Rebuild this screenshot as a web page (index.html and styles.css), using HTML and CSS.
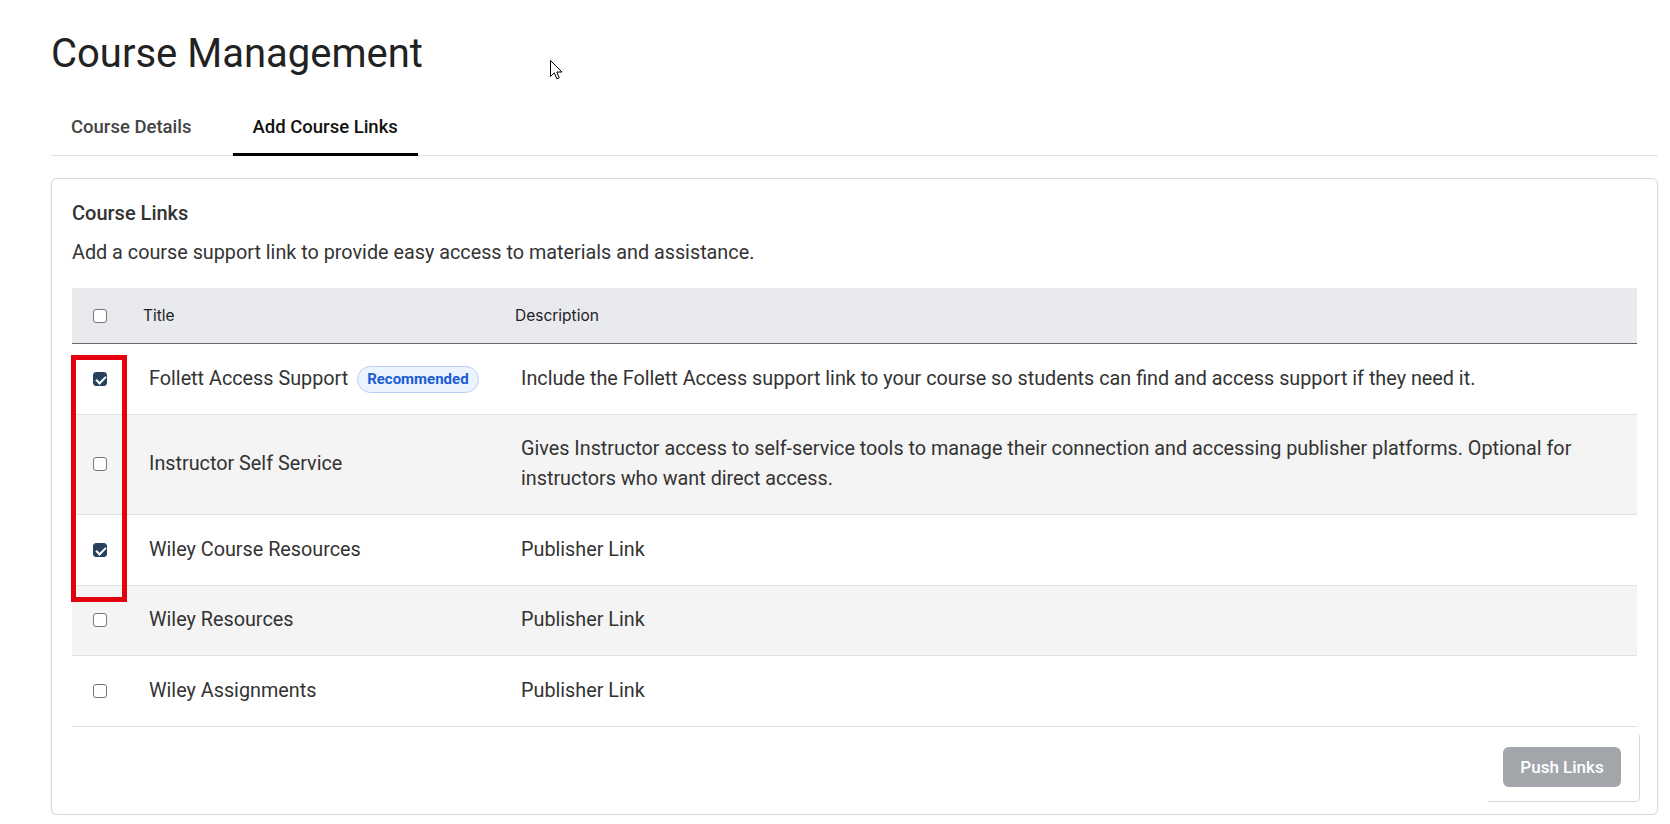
FILE: index.html
```html
<!DOCTYPE html>
<html lang="en">
<head>
    <meta charset="UTF-8">
    <title>Course Management</title>
    <link rel="stylesheet" href="styles.css">
</head>
<body>
    <div class="page">
        <h1 class="page-title">Course Management</h1>

        <div class="tabs">
            <div class="tab">Course Details</div>
            <div class="tab active">Add Course Links</div>
        </div>

        <div class="card">
            <h2 class="card-title">Course Links</h2>
            <p class="card-text">Add a course support link to provide easy access to materials and assistance.</p>

            <table class="links-table">
                <colgroup>
                    <col class="col-check">
                    <col class="col-title">
                    <col>
                </colgroup>
                <thead>
                    <tr>
                        <th><input type="checkbox" class="check"></th>
                        <th>Title</th>
                        <th>Description</th>
                    </tr>
                </thead>
                <tbody>
                    <tr>
                        <td><input type="checkbox" class="check" checked></td>
                        <td>Follett Access Support <span class="badge">Recommended</span></td>
                        <td>Include the Follett Access support link to your course so students can find and access support if they need it.</td>
                    </tr>
                    <tr>
                        <td><input type="checkbox" class="check"></td>
                        <td>Instructor Self Service</td>
                        <td>Gives Instructor access to self-service tools to manage their connection and accessing publisher platforms. Optional for instructors who want direct access.</td>
                    </tr>
                    <tr>
                        <td><input type="checkbox" class="check" checked></td>
                        <td>Wiley Course Resources</td>
                        <td>Publisher Link</td>
                    </tr>
                    <tr>
                        <td><input type="checkbox" class="check"></td>
                        <td>Wiley Resources</td>
                        <td>Publisher Link</td>
                    </tr>
                    <tr>
                        <td><input type="checkbox" class="check"></td>
                        <td>Wiley Assignments</td>
                        <td>Publisher Link</td>
                    </tr>
                </tbody>
            </table>

            <div class="card-footer">
                <button type="button" class="push-btn" disabled>Push Links</button>
            </div>
        </div>
    </div>

    <!-- annotation box drawn over the checkbox column -->
    <div class="highlight"></div>

    <svg class="cursor" width="13" height="21" viewBox="0 0 13 21">
        <path d="M0.5 0.5 L0.5 16.5 L4.3 12.8 L6.8 18.8 L9.2 17.8 L6.8 12 L12 12 Z" fill="#fff" stroke="#000" stroke-width="1" stroke-linejoin="round"/>
    </svg>
</body>
</html>
```

FILE: styles.css
```css
body {
    margin: 0;
    font-family: Roboto, "Liberation Sans", sans-serif;
    color: #333;
    background-color: #fff;
}
.page {
    padding: 0 12px 0 51px;
}
.page-title {
    font-size: 40px;
    font-weight: 400;
    line-height: 48px;
    color: #222;
    margin: 30px 0 22px;
}
.tabs {
    display: flex;
    gap: 21px;
    border-bottom: 1px solid #e2e2e2;
}
.tab {
    padding: 15px 20px 14px;
    font-size: 18.5px;
    font-weight: 500;
    line-height: 24px;
    color: #444;
    border-bottom: 3px solid transparent;
    margin-bottom: -1px;
}
.tab.active {
    color: #111;
    border-bottom-color: #000;
}
.card {
    margin-top: 22px;
    border: 1px solid #d8d8d8;
    border-radius: 6px;
    box-shadow: 0 1px 3px rgba(0, 0, 0, 0.08);
    padding: 20px 20px 12px;
}
.card-title {
    margin: 0;
    font-size: 20px;
    font-weight: 500;
    line-height: 28px;
    color: #333;
}
.card-text {
    margin: 12px 0 21px;
    font-size: 19.8px;
    line-height: 28px;
    color: #333;
}
.links-table {
    width: 100%;
    border-collapse: collapse;
    table-layout: fixed;
}
.col-check {
    width: 59px;
}
.col-title {
    width: 372px;
}
.links-table th {
    height: 55px;
    padding: 0 12px;
    text-align: left;
    font-family: Inter, "Liberation Sans", sans-serif;
    font-size: 15.5px;
    font-weight: 400;
    color: #222;
    background-color: #e9eaee;
    border-bottom: 1px solid #666;
}
.links-table td {
    padding: 19.5px 18px 20px;
    font-size: 19.8px;
    line-height: 30px;
    color: #333;
    vertical-align: middle;
    border-bottom: 1px solid #e1e1e1;
}
.links-table th:first-child,
.links-table td:first-child {
    padding-left: 21px;
    padding-right: 0;
}
.links-table tbody tr:nth-child(even) {
    background-color: #f4f4f4;
}
.check {
    appearance: none;
    -webkit-appearance: none;
    width: 14px;
    height: 14px;
    margin: 0;
    display: block;
    border: 1px solid #777;
    border-radius: 3px;
    background-color: #fff;
    position: relative;
}
.check:checked {
    background-color: #27425d;
    border-color: #27425d;
}
.check:checked::after {
    content: "";
    position: absolute;
    left: 4px;
    top: 1px;
    width: 4px;
    height: 8px;
    border: solid #fff;
    border-width: 0 2px 2px 0;
    transform: rotate(45deg);
}
.badge {
    display: inline-block;
    margin-left: 4px;
    padding: 0 9px;
    height: 25px;
    line-height: 25px;
    border: 1px solid #b9cff1;
    border-radius: 14px;
    background-color: #ebf3fe;
    color: #1b5cd3;
    font-size: 15px;
    font-weight: 700;
    vertical-align: 1px;
}
.card-footer {
    width: 118px;
    margin: 8px -3px 0 auto;
    padding: 12px 18px 14px 15px;
    border-right: 1px solid #d6d6d6;
    border-bottom: 1px solid #d6d6d6;
    border-bottom-right-radius: 5px;
}
.push-btn {
    width: 118px;
    height: 40px;
    border: none;
    border-radius: 6px;
    background-color: #a2a6ab;
    color: #fff;
    font-family: Roboto, "Liberation Sans", sans-serif;
    font-size: 17px;
    font-weight: 500;
}
.highlight {
    position: absolute;
    left: 71px;
    top: 355px;
    width: 46px;
    height: 237px;
    border: 5px solid #e3000f;
}
.cursor {
    position: absolute;
    left: 550px;
    top: 60px;
}
```
